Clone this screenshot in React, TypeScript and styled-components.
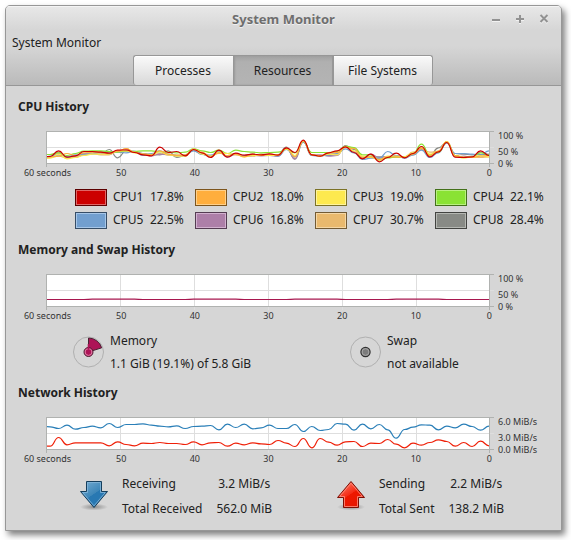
import React from "react";
import styled, { createGlobalStyle } from "styled-components";

const GlobalStyle = createGlobalStyle`
  html, body { margin: 0; background: #fff; }
  *, *::before, *::after { box-sizing: border-box; }
  body, button {
    font-family: "Noto Sans", sans-serif;
    font-size: 12px;
    line-height: 18px;
    color: #212121;
  }
`;

const Window = styled.main`
  margin: 5px 9px 9px 5px;
  border: 1px solid #979797;
  border-radius: 5px 5px 0 0;
  background: #d6d6d6;
  box-shadow: 3px 4px 6px rgba(0, 0, 0, 0.5);
  overflow: hidden;
`;

const Header = styled.header`
  border-bottom: 1px solid #979797;
  background: linear-gradient(#e8e8e8, #d6d6d6 24px, #d6d6d6 40px, #bababa);
  box-shadow: inset 0 1px #f4f4f4;
`;

const TitleBar = styled.div`
  display: grid;
  grid-template-columns: 1fr auto 1fr;
  align-items: center;
  height: 26px;
`;

const Title = styled.h1`
  grid-column: 2;
  margin: 0;
  font-size: 13px;
  line-height: 18px;
  font-weight: 700;
  color: #6e6e6e;
  text-shadow: 0 1px #f0f0f0;
`;

const WindowControls = styled.div`
  display: flex;
  justify-content: flex-end;
  gap: 10px;
  padding-right: 10px;
`;

const PlainButton = styled.button`
  display: block;
  padding: 0;
  border: 0;
  background: none;
  flex: none;
  svg { display: block; }
`;

const MenuBar = styled.nav`
  display: flex;
  height: 23px;
  padding: 0 0 2px 6px;
`;

const Tabs = styled.div`
  display: flex;
  justify-content: center;
  padding-right: 2px;
`;

const Tab = styled.button<{ $active?: boolean }>`
  width: 100px;
  height: 30px;
  padding: 0;
  border: 1px solid #979797;
  border-bottom-width: 0;
  background: ${(p) =>
    p.$active
      ? "linear-gradient(#a2a2a2, #b0b0b0 6px, #b4b4b4)"
      : "linear-gradient(#fafafa, #d8d8d8)"};
  box-shadow: ${(p) => (p.$active ? "inset 1px 0 2px #999" : "inset 0 1px #fff")};
  & + & { border-left-width: ${(p) => (p.$active ? "1px" : "0")}; }
  &:first-child { border-radius: 3px 0 0 3px; border-right: 0; }
  &:last-child { border-radius: 0 3px 3px 0; }
`;

const Content = styled.div`
  padding: 12px 0 9px;
`;

const Section = styled.section<{ $after?: number }>`
  margin-bottom: ${(p) => p.$after ?? 0}px;
`;

const Heading = styled.h2`
  margin: 0 12px 11px;
  font-size: 12px;
  line-height: 18px;
  font-weight: 700;
`;

const ChartGrid = styled.div`
  display: grid;
  grid-template-columns: 1fr 67px;
  padding-left: 40px;
  font-size: 9px;
  line-height: 12px;
`;

const PlotArea = styled.div`
  padding-top: 4px;
`;

const PlotSvg = styled.svg`
  display: block;
  width: 100%;
  height: 37px;
`;

const XAxis = styled.div`
  display: flex;
  justify-content: space-between;
  height: 12px;
  margin: -1px 4px 0 1px;
  color: #333;
`;

const XLabel = styled.span`
  display: flex;
  justify-content: center;
  width: 1px;
  white-space: nowrap;
`;

const YAxis = styled.div`
  display: grid;
  grid-template-rows: 16px 16px 8px;
  align-items: center;
  align-content: start;
  padding: 1px 0 0 4px;
  color: #333;
  white-space: nowrap;
`;

const Legend = styled.div`
  display: grid;
  grid-template-columns: repeat(4, 1fr);
  gap: 5px 0;
  margin-top: 9px;
  padding: 0 6px 0 69px;
`;

const LegendItem = styled.label`
  display: flex;
  align-items: center;
  height: 18px;
`;

const Swatch = styled.button<{ $color: string; $edge: string; $light: string }>`
  width: 32px;
  height: 17px;
  margin-right: 6px;
  padding: 0;
  border: 1px solid ${(p) => p.$edge};
  background: ${(p) => p.$color};
  box-shadow: inset 0 0 0 1px ${(p) => p.$light};
`;

const LegendName = styled.span`
  width: 37px;
`;

const Columns = styled.div<{ $top: number; $line: number; $first: number }>`
  display: grid;
  grid-template-columns: ${(p) => p.$first}px 1fr;
  margin-top: ${(p) => p.$top}px;
  line-height: ${(p) => p.$line}px;
`;

const Usage = styled.div`
  display: flex;
  align-items: center;
  gap: 5px;
  padding-left: 67px;
`;

const Rates = styled.dl`
  display: grid;
  grid-template-columns: auto auto;
  column-gap: 14px;
  margin: 0;
  dt, dd { margin: 0; white-space: nowrap; }
  dd { text-align: center; }
`;

const Transfer = styled.div`
  display: flex;
  align-items: center;
  gap: 12px;
  padding-left: 72px;
`;

type Series = { color: string; values: number[] };

const STEP = 8.44;
const RIGHT = 443;

/* Smooth line through evenly spaced samples; a value of 96 is the plot's top. */
function curve(values: number[]) {
  const pts = values.map((v, i) => [
    RIGHT - (values.length - 1 - i) * STEP,
    32.5 - v / 3,
  ]);
  return pts
    .map(([x, y], i) => {
      if (i === 0) return `M${x.toFixed(1)} ${y.toFixed(1)}`;
      const [px, py] = pts[i - 1];
      const mid = ((px + x) / 2).toFixed(1);
      return `C${mid} ${py.toFixed(1)} ${mid} ${y.toFixed(1)} ${x.toFixed(1)} ${y.toFixed(1)}`;
    })
    .join("");
}

function Chart({ id, label, series, yLabels }: { id: string; label: string; series: Series[]; yLabels: string[] }) {
  return (
    <ChartGrid>
      <PlotArea>
        <PlotSvg viewBox="0 0 448 37" preserveAspectRatio="none" role="img" aria-label={label}>
          <defs>
            <clipPath id={id}>
              <rect x="1" y="1" width="442" height="31" />
            </clipPath>
          </defs>
          <rect x="0" y="0" width="443" height="32" fill="#fff" />
          <path
            d="M0 16.5H448M74.5 0V36M148.5 0V36M222.5 0V36M296.5 0V36M370.5 0V36"
            stroke="#dedede"
            fill="none"
          />
          <path d="M0 .5H448M0 32.5H448M.5 0V36M443.5 0V36" stroke="#b0b2b0" fill="none" />
          <g clipPath={`url(#${id})`} fill="none" strokeWidth="1.2">
            {series.map((s) => (
              <path key={s.color} d={curve(s.values)} stroke={s.color} />
            ))}
          </g>
        </PlotSvg>
        <XAxis>
          {["60 seconds", "50", "40", "30", "20", "10", "0"].map((t) => (
            <XLabel key={t}>{t}</XLabel>
          ))}
        </XAxis>
      </PlotArea>
      <YAxis>
        {yLabels.map((t) => (
          <span key={t}>{t}</span>
        ))}
      </YAxis>
    </ChartGrid>
  );
}

const cpuSeries: Series[] = [
  { color: "#888a85", values: [16, 18, 30, 17, 19, 26, 30, 28, 42, 17, 38, 36, 30, 27, 26, 38, 18, 24, 40, 28, 20, 34, 22, 30, 24, 26, 25, 25, 26, 49, 13, 66, 26, 24, 24, 28, 52, 42, 20, 20, 20, 20, 20, 18, 26, 42, 24, 47, 64, 30, 28, 26, 27, 26] },
  { color: "#e9b96e", values: [14, 18, 22, 18, 20, 27, 30, 26, 26, 36, 45, 33, 27, 24, 30, 26, 26, 24, 42, 30, 24, 30, 30, 26, 24, 22, 28, 24, 26, 44, 20, 64, 26, 24, 30, 28, 48, 46, 20, 20, 14, 18, 20, 20, 34, 44, 34, 36, 66, 24, 18, 20, 18, 20] },
  { color: "#ad7fa8", values: [18, 20, 34, 18, 22, 30, 34, 32, 28, 38, 36, 34, 30, 23, 28, 26, 24, 22, 44, 28, 22, 36, 20, 27, 22, 24, 23, 24, 22, 46, 14, 68, 24, 26, 22, 24, 54, 36, 16, 28, 18, 20, 24, 16, 30, 46, 24, 36, 62, 20, 22, 18, 34, 28] },
  { color: "#729fcf", values: [15, 22, 26, 20, 26, 28, 28, 36, 32, 34, 32, 37, 24, 30, 38, 28, 22, 26, 38, 27, 25, 36, 22, 30, 22, 28, 24, 26, 22, 42, 20, 64, 24, 22, 26, 30, 44, 32, 12, 16, 16, 36, 24, 16, 26, 40, 18, 32, 62, 30, 30, 28, 26, 38] },
  { color: "#8ae234", values: [27, 27, 32, 24, 30, 37, 38, 38, 36, 34, 38, 36, 38, 38, 35, 34, 32, 34, 44, 38, 33, 40, 30, 40, 36, 34, 32, 33, 34, 43, 32, 66, 33, 33, 33, 36, 52, 48, 26, 26, 10, 17, 20, 20, 30, 58, 26, 34, 64, 24, 18, 20, 32, 26] },
  { color: "#fce94f", values: [14, 16, 28, 14, 18, 24, 28, 28, 28, 38, 38, 32, 28, 24, 36, 26, 22, 22, 44, 28, 22, 34, 30, 27, 20, 24, 26, 24, 25, 44, 24, 67, 26, 23, 28, 26, 50, 38, 22, 18, 10, 22, 22, 20, 32, 48, 28, 36, 66, 22, 16, 20, 24, 20] },
  { color: "#fcaf3e", values: [18, 20, 22, 30, 24, 32, 34, 34, 30, 36, 45, 34, 28, 27, 38, 28, 24, 26, 42, 34, 20, 32, 24, 28, 20, 28, 24, 28, 26, 46, 20, 68, 26, 22, 32, 33, 48, 45, 16, 20, 12, 20, 20, 18, 28, 46, 24, 38, 65, 24, 19, 18, 22, 24] },
  { color: "#cc0000", values: [21, 21, 38, 19, 23, 36, 36, 34, 31, 40, 41, 33, 26, 23, 49, 33, 36, 23, 42, 32, 18, 40, 19, 31, 25, 28, 26, 29, 25, 47, 33, 70, 26, 22, 32, 38, 50, 33, 14, 28, 5, 18, 31, 17, 30, 51, 20, 35, 63, 19, 18, 20, 38, 24] },
];

const memorySeries: Series[] = [
  { color: "#a8174f", values: Array.from({ length: 54 }, (_, i) => (i % 12 < 6 ? 21 : 22)) },
];

const networkSeries: Series[] = [
  { color: "#2a7fb8", values: [69, 68, 63, 73, 61, 66, 70, 65, 78, 66, 75, 75, 77, 73, 70, 68, 71, 63, 69, 70, 72, 59, 76, 66, 76, 62, 65, 73, 63, 63, 75, 54, 69, 57, 60, 78, 76, 58, 76, 62, 75, 59, 34, 60, 67, 74, 73, 59, 70, 65, 76, 69, 58, 70] },
  { color: "#ef2008", values: [11, 10, 36, 14, 20, 20, 20, 20, 11, 23, 15, 11, 19, 18, 21, 18, 18, 15, 23, 14, 20, 21, 10, 19, 14, 20, 17, 15, 27, 19, 9, 33, 5, 33, 22, 13, 23, 24, 9, 19, 18, 30, 16, 5, 19, 13, 21, 29, 24, 10, 21, 9, 25, 11] },
];

const cpus = [
  { name: "CPU1", value: "17.8%", color: "#cc0000", edge: "#5c0000", light: "#e06666" },
  { name: "CPU2", value: "18.0%", color: "#ffae3d", edge: "#7d551c", light: "#ffd089" },
  { name: "CPU3", value: "19.0%", color: "#fde94f", edge: "#7c7226", light: "#fff49b" },
  { name: "CPU4", value: "22.1%", color: "#8ae234", edge: "#43701a", light: "#b9f080" },
  { name: "CPU5", value: "22.5%", color: "#729fcf", edge: "#364d66", light: "#a6c6e8" },
  { name: "CPU6", value: "16.8%", color: "#ad7fa8", edge: "#543c52", light: "#d2b1cf" },
  { name: "CPU7", value: "30.7%", color: "#e9b96e", edge: "#725a34", light: "#f5d7a5" },
  { name: "CPU8", value: "28.4%", color: "#888a85", edge: "#424340", light: "#b5b7b2" },
];

function MemoryDial() {
  return (
    <svg width="32" height="32" viewBox="0 0 32 32">
      <circle cx="15.5" cy="16" r="15" fill="none" stroke="#b0b0b0" />
      <path d="M15.5 16V2A14 14 0 0 1 28.7 11.8Z" fill="#ad1457" stroke="#4a2233" />
      <circle cx="15.5" cy="16" r="4.5" fill="#ad1457" stroke="#4a2233" />
      <circle cx="15.5" cy="16" r="3.4" fill="#ad1457" stroke="#e47fa8" />
      <path d="M15.5 13V8" stroke="#ad1457" strokeWidth="1.6" />
    </svg>
  );
}

function SwapDial() {
  return (
    <svg width="32" height="32" viewBox="0 0 32 32">
      <circle cx="15.5" cy="16" r="15" fill="none" stroke="#b0b0b0" />
      <circle cx="15.5" cy="16" r="4.6" fill="#7c7c7c" stroke="#303030" strokeWidth="1.2" />
      <circle cx="15.5" cy="16" r="3.4" fill="none" stroke="#a9a9a9" />
    </svg>
  );
}

function Arrow({ up }: { up?: boolean }) {
  const id = up ? "send" : "receive";
  const outer = up
    ? "M16 1.5 29.5 17.5H23.5V27.5H8.5V17.5H2.5Z"
    : "M8.5 1.5H23.5V11.5H29.5L16 27.5 2.5 11.5H8.5Z";
  const inner = up
    ? "M16 3.2 27.3 16.5H22.5V26.5H9.5V16.5H4.7Z"
    : "M9.5 2.5H22.5V12.5H27.3L16 25.9 4.7 12.5H9.5Z";
  return (
    <svg width="32" height="32" viewBox="0 0 32 32">
      <defs>
        <linearGradient id={id} x1="0" y1="0" x2=".7" y2="1">
          <stop offset="0" stopColor={up ? "#ff8d7c" : "#79aed3"} />
          <stop offset=".55" stopColor={up ? "#f42a14" : "#3d86b8"} />
          <stop offset=".56" stopColor={up ? "#ee1800" : "#2878b2"} />
          <stop offset="1" stopColor={up ? "#e51600" : "#2878b2"} />
        </linearGradient>
        <radialGradient id={`${id}-shade`}>
          <stop offset="0" stopColor="#000" stopOpacity=".35" />
          <stop offset="1" stopColor="#000" stopOpacity="0" />
        </radialGradient>
      </defs>
      <ellipse cx="16" cy="27" rx="14" ry="3.5" fill={`url(#${id}-shade)`} />
      <path d={outer} fill={`url(#${id})`} stroke={up ? "#7a0f05" : "#153e5c"} />
      <path d={inner} fill="none" stroke={up ? "#ff9282" : "#86b7d9"} strokeOpacity=".8" />
    </svg>
  );
}

const controls = [
  { label: "Minimize", d: "M3 8H11" },
  { label: "Maximize", d: "M3 7H11M7 3V11" },
  { label: "Close", d: "M3.5 3L10.5 10M10.5 3L3.5 10" },
];

const percent = ["100 %", "50 %", "0 %"];

export default function App() {
  return (
    <>
      <GlobalStyle />
      <Window>
        <Header>
          <TitleBar>
            <Title>System Monitor</Title>
            <WindowControls>
              {controls.map((c) => (
                <PlainButton key={c.label} aria-label={c.label}>
                  <svg width="14" height="14" viewBox="0 0 14 14" fill="none" strokeWidth="2">
                    <path d={c.d} stroke="#f2f2f2" transform="translate(0 1)" />
                    <path d={c.d} stroke="#929292" />
                  </svg>
                </PlainButton>
              ))}
            </WindowControls>
          </TitleBar>
          <MenuBar>
            <PlainButton>System Monitor</PlainButton>
          </MenuBar>
          <Tabs role="tablist">
            <Tab role="tab">Processes</Tab>
            <Tab role="tab" aria-selected $active>Resources</Tab>
            <Tab role="tab">File Systems</Tab>
          </Tabs>
        </Header>
        <Content>
          <Section $after={12}>
            <Heading>CPU History</Heading>
            <Chart id="cpu" label="CPU usage" series={cpuSeries} yLabels={percent} />
            <Legend>
              {cpus.map((c) => (
                <LegendItem key={c.name}>
                  <Swatch $color={c.color} $edge={c.edge} $light={c.light} />
                  <LegendName>{c.name}</LegendName>
                  <span>{c.value}</span>
                </LegendItem>
              ))}
            </Legend>
          </Section>
          <Section $after={9}>
            <Heading>Memory and Swap History</Heading>
            <Chart id="memory" label="Memory usage" series={memorySeries} yLabels={percent} />
            <Columns $top={7} $line={23} $first={277}>
              <Usage>
                <PlainButton aria-label="Memory color"><MemoryDial /></PlainButton>
                <div>
                  <div>Memory</div>
                  <div>1.1 GiB (19.1%) of 5.8 GiB</div>
                </div>
              </Usage>
              <Usage>
                <PlainButton aria-label="Swap color"><SwapDial /></PlainButton>
                <div>
                  <div>Swap</div>
                  <div>not available</div>
                </div>
              </Usage>
            </Columns>
          </Section>
          <Section>
            <Heading>Network History</Heading>
            <Chart id="network" label="Network usage" series={networkSeries} yLabels={["6.0 MiB/s", "3.0 MiB/s", "0.0 MiB/s"]} />
            <Columns $top={6} $line={25} $first={257}>
              <Transfer>
                <PlainButton aria-label="Receiving color"><Arrow /></PlainButton>
                <Rates>
                  <dt>Receiving</dt><dd>3.2 MiB/s</dd>
                  <dt>Total Received</dt><dd>562.0 MiB</dd>
                </Rates>
              </Transfer>
              <Transfer>
                <PlainButton aria-label="Sending color"><Arrow up /></PlainButton>
                <Rates>
                  <dt>Sending</dt><dd>2.2 MiB/s</dd>
                  <dt>Total Sent</dt><dd>138.2 MiB</dd>
                </Rates>
              </Transfer>
            </Columns>
          </Section>
        </Content>
      </Window>
    </>
  );
}
